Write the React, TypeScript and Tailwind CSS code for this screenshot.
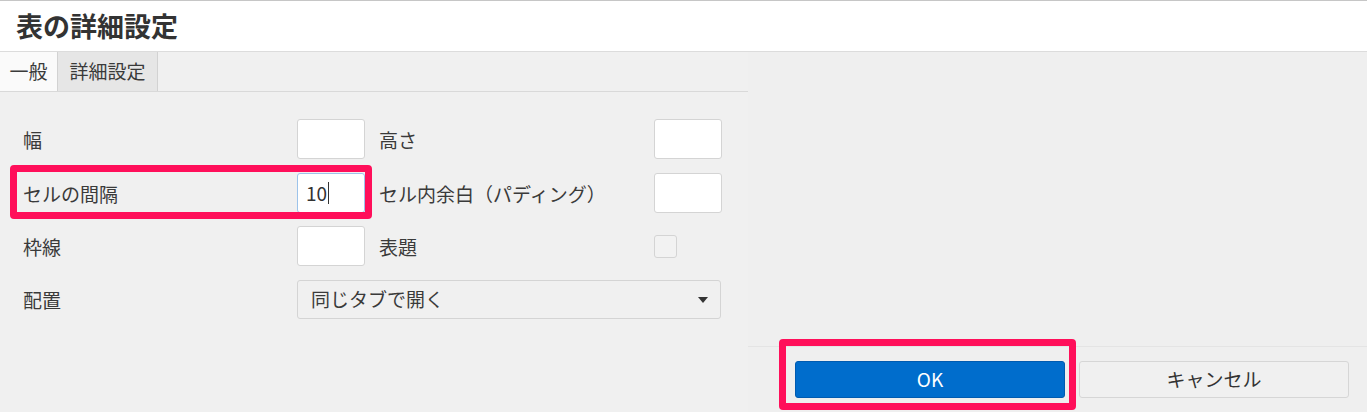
import React from "react";

const Field = ({ value, focused }: { value?: string; focused?: boolean }) => (
  <div
    className={`flex items-center h-[40px] w-[68px] rounded-[3px] bg-white border pl-[8px] text-[19px] text-[#333] ${
      focused ? "border-[#9cc3ea]" : "border-[#d4d4d4]"
    }`}
  >
    {value}
    {focused && <span className="ml-[1px] h-[22px] w-px bg-[#333]" />}
  </div>
);

const Label = ({ children, w }: { children: React.ReactNode; w: string }) => (
  <div className={`${w} shrink-0 text-[19px] leading-none text-[#3a3a3a]`}>{children}</div>
);

export default function App() {
  return (
    <div
      className="relative w-[1367px] h-[412px] overflow-hidden bg-[#efefef] border-t border-[#c6c6c6] text-[#333]"
      style={{ fontFamily: '"Noto Sans CJK JP", "Noto Sans", sans-serif' }}
    >
      {/* header */}
      <div className="h-[51px] bg-white border-b border-[#dcdcdc] flex items-center pl-[16px] pb-[2px]">
        <h1 className="text-[27px] font-bold leading-none text-[#333]">表の詳細設定</h1>
      </div>

      <div className="flex h-[360px]">
        {/* left panel */}
        <div className="w-[748px] shrink-0 bg-[#f0f0f0]">
          <div className="flex h-[40px] border-b border-[#d9d9d9]">
            <div className="w-[57px] flex items-center justify-center bg-[#fafafa] text-[19px] text-[#3a3a3a]">一般</div>
            <div className="w-[101px] flex items-center justify-center bg-[#e6e6e6] border-l border-r border-[#d2d2d2] text-[19px] text-[#3a3a3a]">
              詳細設定
            </div>
          </div>

          <div className="flex flex-col gap-[14px] pl-[23px] pt-[27px]">
            <div className="flex items-center h-[40px]">
              <Label w="w-[274px]">幅</Label>
              <Field />
              <div className="w-[14px]" />
              <Label w="w-[275px]">高さ</Label>
              <Field />
            </div>
            <div className="flex items-center h-[40px]">
              <Label w="w-[274px]">セルの間隔</Label>
              <Field value="10" focused />
              <div className="w-[14px]" />
              <Label w="w-[275px]">セル内余白（パディング）</Label>
              <Field />
            </div>
            <div className="flex items-center h-[40px] -mt-px">
              <Label w="w-[274px]">枠線</Label>
              <Field />
              <div className="w-[14px]" />
              <Label w="w-[275px]">表題</Label>
              <div className="h-[23px] w-[23px] rounded-[3px] border border-[#d4d4d4] bg-[#f2f2f2]" />
            </div>
            <div className="flex items-center h-[39px]">
              <Label w="w-[274px]">配置</Label>
              <div className="flex items-center justify-between h-[39px] w-[424px] rounded-[3px] border border-[#d4d4d4] bg-[#f0f0f0] pl-[13px] pr-[12px] text-[19px] text-[#3a3a3a]">
                <span>同じタブで開く</span>
                <svg width="10" height="6" viewBox="0 0 10 6">
                  <path d="M0 0h10L5 6z" fill="#333" />
                </svg>
              </div>
            </div>
          </div>
        </div>

        {/* footer area */}
        <div className="flex-1 flex flex-col justify-end">
          <div className="border-t border-[#e4e4e4] h-[66px] flex items-start pt-[14px] pl-[47px] gap-[14px]">
            <button className="h-[37px] w-[270px] rounded-[3px] bg-[#006dcc] border border-[#005bb0] text-white text-[19px]">
              OK
            </button>
            <button className="h-[37px] w-[270px] rounded-[3px] bg-[#f0f0f0] border border-[#d6d6d6] text-[#333] text-[19px]">
              キャンセル
            </button>
          </div>
        </div>
      </div>

      {/* annotation boxes */}
      <div className="absolute left-[10px] top-[164px] w-[362px] h-[54px] rounded-[4px] border-[7px] border-[#ff0f5a] pointer-events-none" />
      <div className="absolute left-[779px] top-[338px] w-[297px] h-[71px] rounded-[4px] border-[7px] border-[#ff0f5a] pointer-events-none" />
    </div>
  );
}
